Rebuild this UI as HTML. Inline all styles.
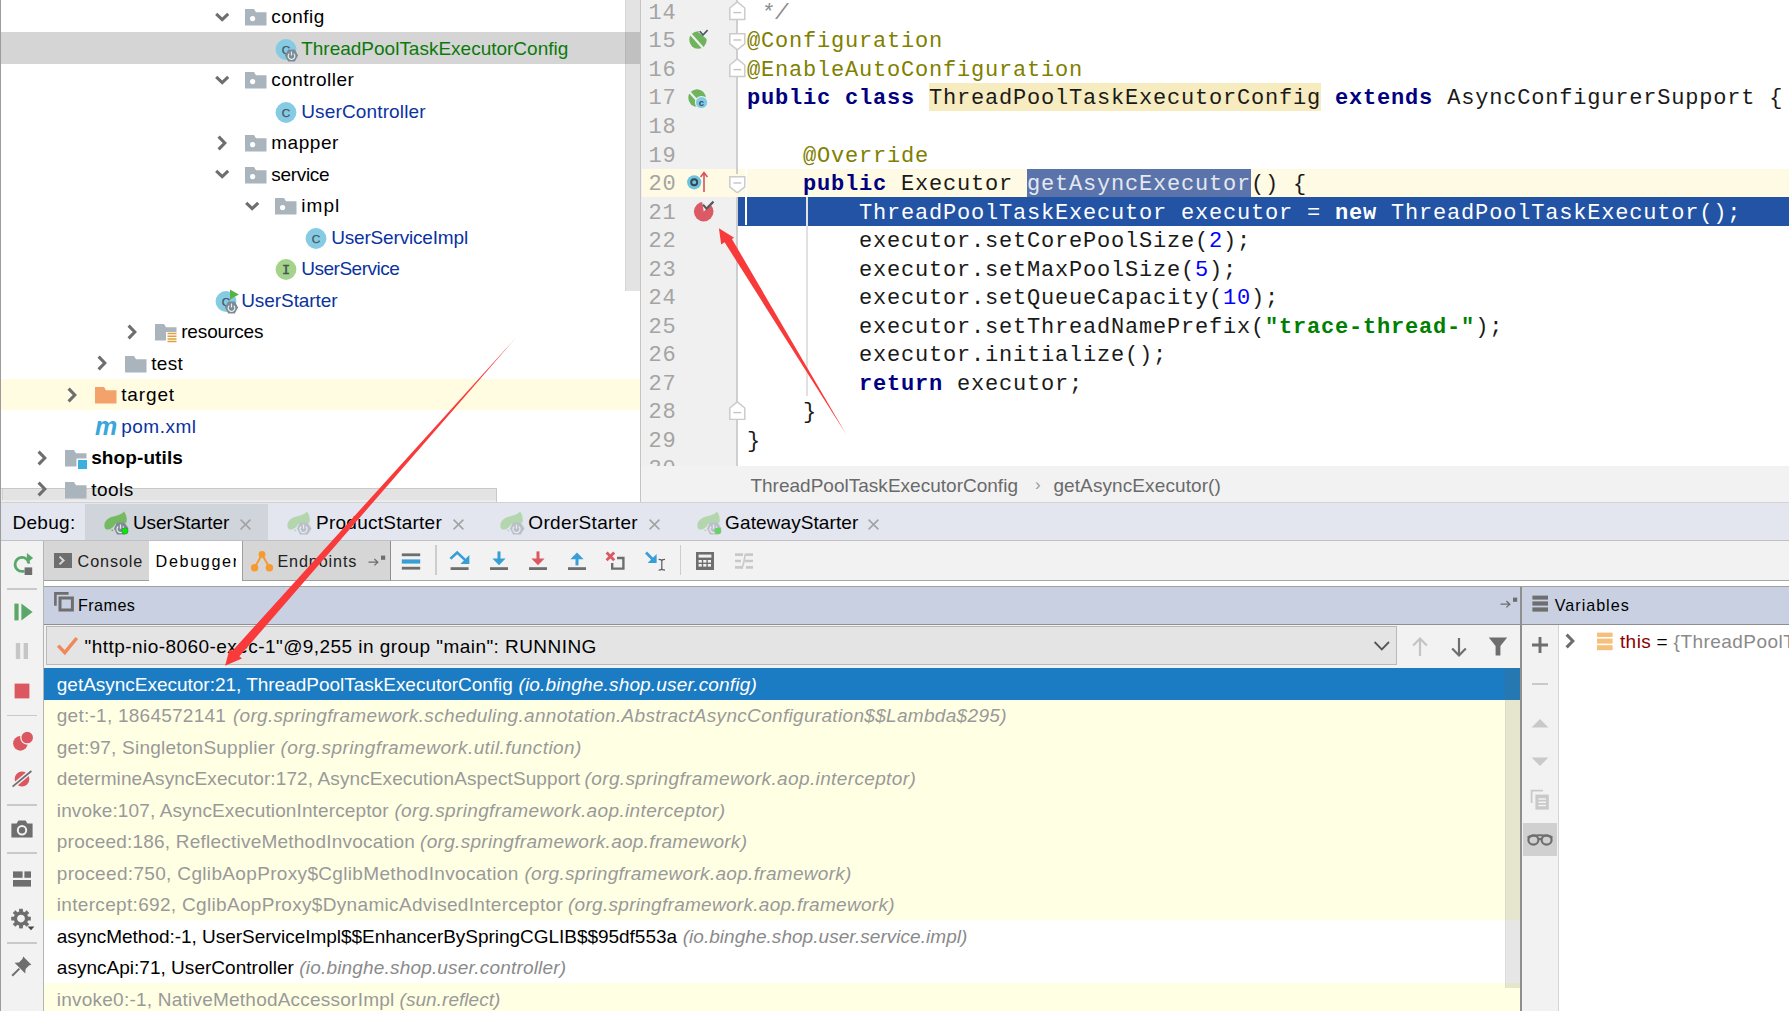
<!DOCTYPE html><html><head><meta charset="utf-8"><title>Debug</title><style>
html,body{margin:0;padding:0}
body{width:1789px;height:1011px;overflow:hidden;position:relative;background:#fff;font-family:"Liberation Sans",sans-serif;font-size:19px;color:#000}
div,span,svg{position:absolute;box-sizing:border-box}
.t{white-space:pre;line-height:32px;height:32px}
.t span,.c span{position:static}
.c{white-space:pre;font-family:"Liberation Mono",monospace;font-size:22px;letter-spacing:0.8px;line-height:28px;height:28px;color:#1a1a1a}
.ln{white-space:pre;font-family:"Liberation Mono",monospace;font-size:22px;letter-spacing:0.8px;line-height:28px;height:28px;color:#a4a4a4}
.kw{color:#000080;font-weight:bold}
.an{color:#808000}
.nu{color:#0000ff}
.st{color:#008000;font-weight:bold}
.gr{color:#8c8c8c}
.it{font-style:italic}
</style></head><body>
<div style="left:0;top:0;width:641px;height:501px;background:#fff"></div>
<div style="left:0;top:32.2px;width:641px;height:31.5px;background:#d5d5d5"></div>
<div style="left:0;top:378.7px;width:641px;height:31.5px;background:#fffce2"></div>
<div style="left:1px;top:487.5px;width:495.8px;height:14.8px;background:#ececec;border-top:1.1px solid #c8c8c8;border-right:1.1px solid #c8c8c8"></div>
<div style="left:2.2px;top:488.6px;width:493.6px;height:11.2px;background:#e3e3e3;border-left:1px solid #cfcfcf"></div>
<svg style="left:214.0px;top:8.849999999999998px" width="16" height="16" viewBox="0 0 16 16"><path d="M2.2 4.8 L8.2 10.6 L14.2 4.8" fill="none" stroke="#6e6e6e" stroke-width="3.1"/></svg>
<svg style="left:245px;top:5.449999999999999px" width="26" height="24" viewBox="0 0 26 24"><path d="M0 4 L9 4 L11 7.2 L21.5 7.2 L21.5 20.6 L0 20.6 Z" fill="#aab4bc"/><circle cx="7.6" cy="13.6" r="2.6" fill="#fff"/></svg>
<span class="t" style="left:271.2px;top:1.3499999999999996px;color:#000;letter-spacing:0.466px;">config</span>
<svg style="left:273px;top:35.85px" width="30" height="30" viewBox="0 0 30 30"><circle cx="13" cy="13.5" r="10.4" fill="#86cbe4"/><text x="13" y="17.7" text-anchor="middle" font-family="Liberation Sans, sans-serif" font-size="11.8" fill="#46525c" stroke="#46525c" stroke-width="0.25">C</text><path d="M11.9 19.5 L15.2 13.45 L21.8 13.45 L25.1 19.5 L21.8 25.55 L15.2 25.55 Z" fill="#7c8a96"/><path d="M16.3 17.6 A3.3 3.3 0 1 0 20.7 17.6 M18.5 15.6 V19.6" fill="none" stroke="#e8edf0" stroke-width="1.2"/></svg>
<span class="t" style="left:301.2px;top:32.85px;color:#0b7a0b;letter-spacing:-0.004px;">ThreadPoolTaskExecutorConfig</span>
<svg style="left:214.0px;top:71.85000000000001px" width="16" height="16" viewBox="0 0 16 16"><path d="M2.2 4.8 L8.2 10.6 L14.2 4.8" fill="none" stroke="#6e6e6e" stroke-width="3.1"/></svg>
<svg style="left:245px;top:68.45px" width="26" height="24" viewBox="0 0 26 24"><path d="M0 4 L9 4 L11 7.2 L21.5 7.2 L21.5 20.6 L0 20.6 Z" fill="#aab4bc"/><circle cx="7.6" cy="13.6" r="2.6" fill="#fff"/></svg>
<span class="t" style="left:271.2px;top:64.35000000000001px;color:#000;letter-spacing:0.504px;">controller</span>
<svg style="left:273px;top:98.85000000000001px" width="30" height="30" viewBox="0 0 30 30"><circle cx="13" cy="13.5" r="10.4" fill="#86cbe4"/><text x="13" y="17.7" text-anchor="middle" font-family="Liberation Sans, sans-serif" font-size="11.8" fill="#46525c" stroke="#46525c" stroke-width="0.25">C</text></svg>
<span class="t" style="left:301.2px;top:95.85000000000001px;color:#0a32a0;letter-spacing:0.151px;">UserController</span>
<svg style="left:214.0px;top:134.85px" width="16" height="16" viewBox="0 0 16 16"><path d="M4.6 1.6 L10.8 8 L4.6 14.4" fill="none" stroke="#6e6e6e" stroke-width="3.1"/></svg>
<svg style="left:245px;top:131.45px" width="26" height="24" viewBox="0 0 26 24"><path d="M0 4 L9 4 L11 7.2 L21.5 7.2 L21.5 20.6 L0 20.6 Z" fill="#aab4bc"/><circle cx="7.6" cy="13.6" r="2.6" fill="#fff"/></svg>
<span class="t" style="left:271.2px;top:127.35px;color:#000;letter-spacing:0.563px;">mapper</span>
<svg style="left:214.0px;top:166.35px" width="16" height="16" viewBox="0 0 16 16"><path d="M2.2 4.8 L8.2 10.6 L14.2 4.8" fill="none" stroke="#6e6e6e" stroke-width="3.1"/></svg>
<svg style="left:245px;top:162.95px" width="26" height="24" viewBox="0 0 26 24"><path d="M0 4 L9 4 L11 7.2 L21.5 7.2 L21.5 20.6 L0 20.6 Z" fill="#aab4bc"/><circle cx="7.6" cy="13.6" r="2.6" fill="#fff"/></svg>
<span class="t" style="left:271.2px;top:158.85px;color:#000;letter-spacing:-0.298px;">service</span>
<svg style="left:244.0px;top:197.85px" width="16" height="16" viewBox="0 0 16 16"><path d="M2.2 4.8 L8.2 10.6 L14.2 4.8" fill="none" stroke="#6e6e6e" stroke-width="3.1"/></svg>
<svg style="left:275px;top:194.45px" width="26" height="24" viewBox="0 0 26 24"><path d="M0 4 L9 4 L11 7.2 L21.5 7.2 L21.5 20.6 L0 20.6 Z" fill="#aab4bc"/><circle cx="7.6" cy="13.6" r="2.6" fill="#fff"/></svg>
<span class="t" style="left:301.2px;top:190.35px;color:#000;letter-spacing:1.089px;">impl</span>
<svg style="left:303px;top:224.85px" width="30" height="30" viewBox="0 0 30 30"><circle cx="13" cy="13.5" r="10.4" fill="#86cbe4"/><text x="13" y="17.7" text-anchor="middle" font-family="Liberation Sans, sans-serif" font-size="11.8" fill="#46525c" stroke="#46525c" stroke-width="0.25">C</text></svg>
<span class="t" style="left:331.2px;top:221.85px;color:#0a32a0;letter-spacing:-0.172px;">UserServiceImpl</span>
<svg style="left:273px;top:256.34999999999997px" width="30" height="30" viewBox="0 0 30 30"><circle cx="13" cy="13.5" r="10.4" fill="#a5d38a"/><text x="13" y="18.2" text-anchor="middle" font-family="Liberation Mono, monospace" font-size="13.5" fill="#46525c" stroke="#46525c" stroke-width="0.5">I</text></svg>
<span class="t" style="left:301.2px;top:253.35px;color:#0a32a0;letter-spacing:-0.48px;">UserService</span>
<svg style="left:213px;top:287.84999999999997px" width="30" height="30" viewBox="0 0 30 30"><circle cx="13" cy="13.5" r="10.4" fill="#86cbe4"/><text x="13" y="17.7" text-anchor="middle" font-family="Liberation Sans, sans-serif" font-size="11.8" fill="#46525c" stroke="#46525c" stroke-width="0.25">C</text><path d="M17 1.4 L25.8 6.4 L17 11.4 Z" fill="#59b343"/><path d="M11.9 19.5 L15.2 13.45 L21.8 13.45 L25.1 19.5 L21.8 25.55 L15.2 25.55 Z" fill="#7c8a96"/><path d="M16.3 17.6 A3.3 3.3 0 1 0 20.7 17.6 M18.5 15.6 V19.6" fill="none" stroke="#e8edf0" stroke-width="1.2"/></svg>
<span class="t" style="left:241.2px;top:284.84999999999997px;color:#0a32a0;letter-spacing:-0.067px;">UserStarter</span>
<svg style="left:124.0px;top:323.84999999999997px" width="16" height="16" viewBox="0 0 16 16"><path d="M4.6 1.6 L10.8 8 L4.6 14.4" fill="none" stroke="#6e6e6e" stroke-width="3.1"/></svg>
<svg style="left:155px;top:320.45px" width="26" height="24" viewBox="0 0 26 24"><path d="M0 4 L9 4 L11 7.2 L21.5 7.2 L21.5 20.6 L0 20.6 Z" fill="#aab4bc"/><rect x="11" y="12" width="11.5" height="10" fill="#fff"/><path d="M12.5 13.5h9M12.5 16.2h9M12.5 18.9h9M12.5 21.6h9" stroke="#e0a040" stroke-width="1.5"/></svg>
<span class="t" style="left:181.2px;top:316.34999999999997px;color:#000;letter-spacing:-0.147px;">resources</span>
<svg style="left:94.0px;top:355.34999999999997px" width="16" height="16" viewBox="0 0 16 16"><path d="M4.6 1.6 L10.8 8 L4.6 14.4" fill="none" stroke="#6e6e6e" stroke-width="3.1"/></svg>
<svg style="left:125px;top:351.95px" width="26" height="24" viewBox="0 0 26 24"><path d="M0 4 L9 4 L11 7.2 L21.5 7.2 L21.5 20.6 L0 20.6 Z" fill="#aab4bc"/></svg>
<span class="t" style="left:151.2px;top:347.84999999999997px;color:#000;letter-spacing:0.344px;">test</span>
<svg style="left:64.0px;top:386.84999999999997px" width="16" height="16" viewBox="0 0 16 16"><path d="M4.6 1.6 L10.8 8 L4.6 14.4" fill="none" stroke="#6e6e6e" stroke-width="3.1"/></svg>
<svg style="left:95px;top:383.45px" width="26" height="24" viewBox="0 0 26 24"><path d="M0 4 L9 4 L11 7.2 L21.5 7.2 L21.5 20.6 L0 20.6 Z" fill="#f4a26b"/></svg>
<span class="t" style="left:121.2px;top:379.34999999999997px;color:#000;letter-spacing:0.868px;">target</span>
<span class="t it" style="left:95px;top:410.34999999999997px;color:#3aa7dc;font-size:25px;font-weight:bold;letter-spacing:-1px">m</span>
<span class="t" style="left:121.2px;top:410.84999999999997px;color:#0a32a0;letter-spacing:0.5px;">pom.xml</span>
<svg style="left:34.0px;top:449.84999999999997px" width="16" height="16" viewBox="0 0 16 16"><path d="M4.6 1.6 L10.8 8 L4.6 14.4" fill="none" stroke="#6e6e6e" stroke-width="3.1"/></svg>
<svg style="left:65px;top:446.45px" width="26" height="24" viewBox="0 0 26 24"><path d="M0 4 L9 4 L11 7.2 L21.5 7.2 L21.5 20.6 L0 20.6 Z" fill="#aab4bc"/><rect x="11.5" y="12.5" width="11" height="11" fill="#fff"/><rect x="13" y="14" width="9" height="9" fill="#3ab0e0"/></svg>
<span class="t" style="left:91.2px;top:442.34999999999997px;color:#000;font-weight:bold;letter-spacing:0.102px;">shop-utils</span>
<svg style="left:34.0px;top:481.34999999999997px" width="16" height="16" viewBox="0 0 16 16"><path d="M4.6 1.6 L10.8 8 L4.6 14.4" fill="none" stroke="#6e6e6e" stroke-width="3.1"/></svg>
<svg style="left:65px;top:477.95px" width="26" height="24" viewBox="0 0 26 24"><path d="M0 4 L9 4 L11 7.2 L21.5 7.2 L21.5 20.6 L0 20.6 Z" fill="#aab4bc"/></svg>
<span class="t" style="left:91.2px;top:473.84999999999997px;color:#000;letter-spacing:0.452px;">tools</span>
<div style="left:625px;top:0;width:16px;height:291px;background:rgba(100,100,100,.18);border-left:1px solid rgba(100,100,100,.1)"></div>
<div style="left:641px;top:0;width:1148px;height:467px;background:#fff"></div>
<div style="left:640.3px;top:0;width:97px;height:467px;background:#f0f0f0;border-left:1.4px solid #c4c4c4"></div>
<div style="left:641.5px;top:168.97px;width:1148px;height:27.73px;background:#fffae3"></div>
<div style="left:737.5px;top:196.7px;width:1052px;height:28.830000000000002px;background:#2253a4"></div>
<div style="left:736.3px;top:0;width:2px;height:174.17px;background:#cecece"></div>
<div style="left:736.3px;top:196.7px;width:2px;height:270.3px;background:#cecece"></div>
<div style="left:929.0px;top:82.57999999999998px;width:392.0px;height:28.53px;background:#f7ecc0"></div>
<div style="left:1027.0px;top:169.17px;width:224.0px;height:27.53px;background:#5a73aa"></div>
<div style="left:806.3px;top:196.7px;width:1.4px;height:199.71px;background:#e1e1e1"></div>
<div style="left:745.3px;top:168.17px;width:1.3px;height:57.06px;background:#fff"></div>
<span class="ln" style="left:648.6px;top:-0.11000000000001942px">14</span>
<span class="c" style="left:747.0px;top:-0.11000000000001942px"><span class="gr it"> */</span></span>
<span class="ln" style="left:648.6px;top:28.41999999999998px">15</span>
<span class="c" style="left:747.0px;top:28.41999999999998px"><span class="an">@Configuration</span></span>
<span class="ln" style="left:648.6px;top:56.94999999999998px">16</span>
<span class="c" style="left:747.0px;top:56.94999999999998px"><span class="an">@EnableAutoConfiguration</span></span>
<span class="ln" style="left:648.6px;top:85.47999999999999px">17</span>
<span class="c" style="left:747.0px;top:85.47999999999999px"><span class="kw">public class</span> ThreadPoolTaskExecutorConfig <span class="kw">extends</span> AsyncConfigurerSupport {</span>
<span class="ln" style="left:648.6px;top:114.00999999999999px">18</span>
<span class="ln" style="left:648.6px;top:142.54px">19</span>
<span class="c" style="left:747.0px;top:142.54px">    <span class="an">@Override</span></span>
<span class="ln" style="left:648.6px;top:171.07px">20</span>
<span class="c" style="left:747.0px;top:171.07px">    <span class="kw">public</span> Executor <span style="color:#e4e8f1">getAsyncExecutor</span>() {</span>
<span class="ln" style="left:648.6px;top:199.6px">21</span>
<span class="c" style="left:747.0px;top:199.6px"><span style="color:#fff">        ThreadPoolTaskExecutor executor = <b>new</b> ThreadPoolTaskExecutor();</span></span>
<span class="ln" style="left:648.6px;top:228.13px">22</span>
<span class="c" style="left:747.0px;top:228.13px">        executor.setCorePoolSize(<span class="nu">2</span>);</span>
<span class="ln" style="left:648.6px;top:256.65999999999997px">23</span>
<span class="c" style="left:747.0px;top:256.65999999999997px">        executor.setMaxPoolSize(<span class="nu">5</span>);</span>
<span class="ln" style="left:648.6px;top:285.18999999999994px">24</span>
<span class="c" style="left:747.0px;top:285.18999999999994px">        executor.setQueueCapacity(<span class="nu">10</span>);</span>
<span class="ln" style="left:648.6px;top:313.71999999999997px">25</span>
<span class="c" style="left:747.0px;top:313.71999999999997px">        executor.setThreadNamePrefix(<span class="st">"trace-thread-"</span>);</span>
<span class="ln" style="left:648.6px;top:342.25px">26</span>
<span class="c" style="left:747.0px;top:342.25px">        executor.initialize();</span>
<span class="ln" style="left:648.6px;top:370.78px">27</span>
<span class="c" style="left:747.0px;top:370.78px">        <span class="kw">return</span> executor;</span>
<span class="ln" style="left:648.6px;top:399.30999999999995px">28</span>
<span class="c" style="left:747.0px;top:399.30999999999995px">    }</span>
<span class="ln" style="left:648.6px;top:427.84px">29</span>
<span class="c" style="left:747.0px;top:427.84px">}</span>
<span class="ln" style="left:648.6px;top:456.36999999999995px">30</span>
<svg style="left:729.1px;top:1.1899999999999809px" width="16.6" height="19.4" viewBox="0 0 16.6 19.4"><path d="M0.8 18.6 H15.8 V7 L8.3 0.8 L0.8 7 Z" fill="#fff" stroke="#cbcbcb" stroke-width="1.5"/><path d="M4.4 11.6H12.2" stroke="#c4c4c4" stroke-width="1.4"/></svg>
<svg style="left:729.1px;top:32.91999999999998px" width="16.6" height="17.6" viewBox="0 0 16.6 17.6"><path d="M0.8 0.8 H15.8 V10.8 L8.3 16.8 L0.8 10.8 Z" fill="#fff" stroke="#cbcbcb" stroke-width="1.5"/><path d="M4.4 7H12.2" stroke="#c4c4c4" stroke-width="1.4"/></svg>
<svg style="left:729.1px;top:58.249999999999986px" width="16.6" height="19.4" viewBox="0 0 16.6 19.4"><path d="M0.8 18.6 H15.8 V7 L8.3 0.8 L0.8 7 Z" fill="#fff" stroke="#cbcbcb" stroke-width="1.5"/><path d="M4.4 11.6H12.2" stroke="#c4c4c4" stroke-width="1.4"/></svg>
<svg style="left:729.1px;top:175.57px" width="16.6" height="17.6" viewBox="0 0 16.6 17.6"><path d="M0.8 0.8 H15.8 V10.8 L8.3 16.8 L0.8 10.8 Z" fill="#fff" stroke="#cbcbcb" stroke-width="1.5"/><path d="M4.4 7H12.2" stroke="#c4c4c4" stroke-width="1.4"/></svg>
<svg style="left:729.1px;top:400.60999999999996px" width="16.6" height="19.4" viewBox="0 0 16.6 19.4"><path d="M0.8 18.6 H15.8 V7 L8.3 0.8 L0.8 7 Z" fill="#fff" stroke="#cbcbcb" stroke-width="1.5"/><path d="M4.4 11.6H12.2" stroke="#c4c4c4" stroke-width="1.4"/></svg>
<svg style="left:686.7px;top:27.484999999999985px" width="26" height="26" viewBox="0 0 26 26"><circle cx="11" cy="13" r="8.7" fill="#6fb35c"/><path d="M3.5 7 L16 21" stroke="#f0f0f0" stroke-width="2.2"/><path d="M11 5 L21 5 L21 13 Z" fill="#f0f0f0"/><path d="M12.8 4.2 L16 8 L20.6 3.2" fill="none" stroke="#4a5868" stroke-width="1.7"/></svg>
<svg style="left:686.2px;top:84.54499999999999px" width="26" height="26" viewBox="0 0 26 26"><circle cx="11" cy="13" r="8.7" fill="#6fb35c"/><path d="M3.5 7 L16 21" stroke="#f0f0f0" stroke-width="2.2"/><circle cx="15.5" cy="17.5" r="6.6" fill="#f0f0f0"/><circle cx="15.5" cy="17.5" r="5.6" fill="#7ecbe6"/><text x="15.5" y="20.6" text-anchor="middle" font-family="Liberation Sans, sans-serif" font-size="9.5" font-weight="bold" fill="#3c4a55">c</text></svg>
<svg style="left:684px;top:169.435px" width="30" height="26" viewBox="0 0 30 26"><circle cx="10.2" cy="13.3" r="7.1" fill="#6cc3e0"/><circle cx="10.2" cy="13.3" r="3" fill="none" stroke="#3a4752" stroke-width="1.9"/><path d="M20 23 V4.5 M16.6 8 L20 3.6 L23.4 8" fill="none" stroke="#d8525f" stroke-width="1.6"/></svg>
<svg style="left:690px;top:195.96499999999997px" width="30" height="30" viewBox="0 0 30 30"><circle cx="13.7" cy="15.6" r="9.8" fill="#dc5a66"/><path d="M13.7 15.6 L12 5 L26 5 Z" fill="#f0f0f0"/><path d="M13 8.6 L16.5 12.6 L23.5 5.6" fill="none" stroke="#5a5a5a" stroke-width="2.2"/></svg>
<div style="left:640.3px;top:465.8px;width:1149px;height:37px;background:#f2f2f2;border-left:1.4px solid #c4c4c4"></div>
<span class="t" style="left:750.4px;top:469.9px;color:#6a6a6a;letter-spacing:0.014px;">ThreadPoolTaskExecutorConfig</span>
<span class="t" style="left:1035px;top:469px;color:#9a9a9a;font-size:17px">›</span>
<span class="t" style="left:1053.4px;top:469.9px;color:#6a6a6a;letter-spacing:0.1px;">getAsyncExecutor()</span>
<div style="left:0;top:502.2px;width:1789px;height:38px;background:#e3e6ef;border-top:1px solid #d2d2d4"></div>
<div style="left:85px;top:504px;width:183px;height:35.5px;background:#d0d4db"></div>
<span class="t" style="left:12.4px;top:506.5px;color:#000;letter-spacing:0.32px;">Debug:</span>
<svg style="left:103.5px;top:510.5px" width="27" height="26" viewBox="0 0 27 26"><path d="M20.1 0.5 C17.5 3.6 13 4.6 9.4 5.6 C4 7 0.4 10 0.4 14.4 C0.4 16.2 1 17.6 2.2 18.6 L5.2 18.6 C8 17.4 10 15.4 11.4 13 L22.6 11.4 C23.3 7.4 22.2 3.6 20.1 0.5 Z" fill="#76b963"/><path d="M6.4 19 L9.4 18.4 L9 20.4 Z" fill="#76b963"/><path d="M10 17.5 L13 11.6 L20.7 11.6 L24.5 17.5 L20.7 23.4 L13 23.4 Z" fill="#7f8b95"/><path d="M14.2 15.4 A3.5 3.5 0 1 0 18.8 15.4 M16.5 13.4 V17.8" fill="none" stroke="#e6e9ee" stroke-width="1.3"/><circle cx="20.9" cy="19.9" r="3.2" fill="#08e808" stroke="#3c6a3c" stroke-width="0.5"/></svg>
<span class="t" style="left:132.89999999999998px;top:506.5px;color:#000;letter-spacing:-0.076px;">UserStarter</span>
<svg style="left:240px;top:518.5px" width="11" height="11" viewBox="0 0 11 11"><path d="M0.6 0.6 L10.4 10.4 M10.4 0.6 L0.6 10.4" stroke="#a2a2a2" stroke-width="1.5"/></svg>
<svg style="left:286.8px;top:510.5px" width="27" height="26" viewBox="0 0 27 26"><path d="M20.1 0.5 C17.5 3.6 13 4.6 9.4 5.6 C4 7 0.4 10 0.4 14.4 C0.4 16.2 1 17.6 2.2 18.6 L5.2 18.6 C8 17.4 10 15.4 11.4 13 L22.6 11.4 C23.3 7.4 22.2 3.6 20.1 0.5 Z" fill="#b4d6ae"/><path d="M6.4 19 L9.4 18.4 L9 20.4 Z" fill="#b4d6ae"/><path d="M10 17.5 L13 11.6 L20.7 11.6 L24.5 17.5 L20.7 23.4 L13 23.4 Z" fill="#b9c0c8"/><path d="M14.2 15.4 A3.5 3.5 0 1 0 18.8 15.4 M16.5 13.4 V17.8" fill="none" stroke="#e6e9ee" stroke-width="1.3"/></svg>
<span class="t" style="left:316.0px;top:506.5px;color:#000;letter-spacing:0.25px;">ProductStarter</span>
<svg style="left:453px;top:518.5px" width="11" height="11" viewBox="0 0 11 11"><path d="M0.6 0.6 L10.4 10.4 M10.4 0.6 L0.6 10.4" stroke="#a2a2a2" stroke-width="1.5"/></svg>
<svg style="left:499.6px;top:510.5px" width="27" height="26" viewBox="0 0 27 26"><path d="M20.1 0.5 C17.5 3.6 13 4.6 9.4 5.6 C4 7 0.4 10 0.4 14.4 C0.4 16.2 1 17.6 2.2 18.6 L5.2 18.6 C8 17.4 10 15.4 11.4 13 L22.6 11.4 C23.3 7.4 22.2 3.6 20.1 0.5 Z" fill="#b4d6ae"/><path d="M6.4 19 L9.4 18.4 L9 20.4 Z" fill="#b4d6ae"/><path d="M10 17.5 L13 11.6 L20.7 11.6 L24.5 17.5 L20.7 23.4 L13 23.4 Z" fill="#b9c0c8"/><path d="M14.2 15.4 A3.5 3.5 0 1 0 18.8 15.4 M16.5 13.4 V17.8" fill="none" stroke="#e6e9ee" stroke-width="1.3"/></svg>
<span class="t" style="left:528.3000000000001px;top:506.5px;color:#000;letter-spacing:0.342px;">OrderStarter</span>
<svg style="left:649px;top:518.5px" width="11" height="11" viewBox="0 0 11 11"><path d="M0.6 0.6 L10.4 10.4 M10.4 0.6 L0.6 10.4" stroke="#a2a2a2" stroke-width="1.5"/></svg>
<svg style="left:696.5px;top:510.5px" width="27" height="26" viewBox="0 0 27 26"><path d="M20.1 0.5 C17.5 3.6 13 4.6 9.4 5.6 C4 7 0.4 10 0.4 14.4 C0.4 16.2 1 17.6 2.2 18.6 L5.2 18.6 C8 17.4 10 15.4 11.4 13 L22.6 11.4 C23.3 7.4 22.2 3.6 20.1 0.5 Z" fill="#b4d6ae"/><path d="M6.4 19 L9.4 18.4 L9 20.4 Z" fill="#b4d6ae"/><path d="M10 17.5 L13 11.6 L20.7 11.6 L24.5 17.5 L20.7 23.4 L13 23.4 Z" fill="#b9c0c8"/><path d="M14.2 15.4 A3.5 3.5 0 1 0 18.8 15.4 M16.5 13.4 V17.8" fill="none" stroke="#e6e9ee" stroke-width="1.3"/><circle cx="20.9" cy="19.9" r="3.2" fill="#5fd85f" stroke="#8fb08f" stroke-width="0.5"/></svg>
<span class="t" style="left:725.1px;top:506.5px;color:#000;letter-spacing:0.093px;">GatewayStarter</span>
<svg style="left:868px;top:518.5px" width="11" height="11" viewBox="0 0 11 11"><path d="M0.6 0.6 L10.4 10.4 M10.4 0.6 L0.6 10.4" stroke="#a2a2a2" stroke-width="1.5"/></svg>
<div style="left:0;top:540px;width:1789px;height:41px;background:#f2f2f2;border-top:0.9px solid #c0c0c2;border-bottom:1.2px solid #a6a6a6"></div>
<div style="left:44px;top:580.9px;width:1745px;height:6.1px;background:#fff;border-bottom:1.2px solid #a0a0a0"></div>
<div style="left:1px;top:540.9px;width:43.1px;height:471px;background:#f2f2f2;border-right:1.1px solid #b4b4b4"></div>
<div style="left:44px;top:540.9px;width:105px;height:40px;background:#d6d6d6;border-bottom:1.2px solid #9e9e9e"></div>
<div style="left:148.6px;top:540.9px;width:93.6px;height:45px;background:#fff"></div>
<div style="left:242px;top:540.9px;width:148.8px;height:40px;background:#d6d6d6;border-bottom:1.2px solid #9e9e9e;border-left:1.4px solid #9e9e9e;border-right:1.2px solid #8e8e8e"></div>
<svg style="left:54px;top:553.3px" width="18" height="15" viewBox="0 0 18 15"><rect width="18" height="15" fill="#6e6e6e"/><path d="M5.5 3.6 L9.6 7.5 L5.5 11.4" fill="none" stroke="#d9d9d9" stroke-width="2"/></svg>
<span class="t" style="left:77.6px;top:545px;color:#222;font-size:16.2px;letter-spacing:0.885px;">Console</span>
<span class="t" style="left:155.6px;top:545px;color:#000;font-size:16.2px;letter-spacing:1.636px;width:80px;overflow:hidden;">Debugger</span>
<svg style="left:250px;top:549.5px" width="24" height="23" viewBox="0 0 24 23"><path d="M4.6 17.6 L12 4.6 L19.4 17.6 M4.6 17.6" fill="none" stroke="#f7992f" stroke-width="2"/><circle cx="12" cy="4.4" r="3.4" fill="#f7992f"/><circle cx="4.6" cy="17.8" r="3.7" fill="#f7992f"/><circle cx="19.4" cy="17.8" r="3.7" fill="#f7992f"/><path d="M8.3 13.5 L12 17.5 L15.7 13.5" fill="none" stroke="#f7992f" stroke-width="0"/></svg>
<span class="t" style="left:277.4px;top:545px;color:#222;font-size:16.2px;letter-spacing:0.878px;">Endpoints</span>
<svg style="left:368px;top:554.5px" width="18" height="12" viewBox="0 0 18 12"><path d="M0.5 7.2 H9.5 M6.4 4 L9.8 7.2 L6.4 10.4" fill="none" stroke="#6e6e6e" stroke-width="1.3"/><rect x="13" y="0.6" width="4.2" height="4.2" fill="#6e6e6e"/></svg>
<svg style="left:400.0px;top:550px" width="22" height="22" viewBox="0 0 22 22"><rect x="1.8" y="3.4" width="18.4" height="2.8" fill="#6e6e6e"/><rect x="1.8" y="9.4" width="18.4" height="4.2" fill="#389fd6"/><rect x="1.8" y="16.8" width="18.4" height="2.8" fill="#6e6e6e"/></svg>
<div style="left:435.3px;top:545px;width:1.5px;height:30px;background:#cdcdcd"></div>
<svg style="left:449.0px;top:550px" width="22" height="22" viewBox="0 0 22 22"><rect x="1.6" y="17.2" width="18" height="2.8" fill="#6e6e6e"/><path d="M1.4 8.8 L8.2 2.6 L17.6 11.4" fill="none" stroke="#389fd6" stroke-width="2.6"/><path d="M20.4 5 V14 H11.4 Z" fill="#389fd6"/></svg>
<svg style="left:488.0px;top:550px" width="22" height="22" viewBox="0 0 22 22"><rect x="2" y="17.2" width="18" height="2.8" fill="#6e6e6e"/><path d="M11 1.4 V10" stroke="#389fd6" stroke-width="3"/><path d="M4.4 8.6 H17.6 L11 15.2 Z" fill="#389fd6"/></svg>
<svg style="left:527.0px;top:550px" width="22" height="22" viewBox="0 0 22 22"><rect x="2" y="17.2" width="18" height="2.8" fill="#6e6e6e"/><path d="M11 1.4 V10" stroke="#db5860" stroke-width="3"/><path d="M4.4 8.6 H17.6 L11 15.2 Z" fill="#db5860"/></svg>
<svg style="left:566.0px;top:550px" width="22" height="22" viewBox="0 0 22 22"><rect x="2" y="17.2" width="18" height="2.8" fill="#6e6e6e"/><path d="M11 15.4 V8" stroke="#389fd6" stroke-width="3"/><path d="M4.4 9.2 H17.6 L11 2.6 Z" fill="#389fd6"/></svg>
<svg style="left:605.0px;top:550px" width="22" height="22" viewBox="0 0 22 22"><path d="M1.6 2.6 L9.2 10.2 M9.2 2.6 L1.6 10.2" stroke="#db5860" stroke-width="2.8"/><path d="M12 8 H18.4 V18.6 H7.2 V13" fill="none" stroke="#6e6e6e" stroke-width="2.4"/></svg>
<svg style="left:644.0px;top:550px" width="24" height="22" viewBox="0 0 24 22"><path d="M2 2.6 L9.6 10.2" stroke="#389fd6" stroke-width="2.8"/><path d="M12.6 4 V13 H3.6 Z" fill="#389fd6"/><path d="M17.8 9.8 V19.8 M14.6 9.4 C16.6 9.4 17.8 9.6 17.8 11 C17.8 9.6 19 9.4 21 9.4 M14.6 20.2 C16.6 20.2 17.8 20 17.8 18.6 C17.8 20 19 20.2 21 20.2" fill="none" stroke="#5a5a5a" stroke-width="1.2"/></svg>
<div style="left:679.5px;top:545px;width:1.5px;height:30px;background:#cdcdcd"></div>
<svg style="left:694.0px;top:550px" width="22" height="22" viewBox="0 0 22 22"><rect x="2" y="2" width="18" height="18" fill="#6e6e6e"/><rect x="4.6" y="4.6" width="12.8" height="3" fill="#f2f2f2"/><rect x="4.6" y="10" width="3.2" height="2.6" fill="#f2f2f2"/><rect x="4.6" y="14" width="3.2" height="2.6" fill="#f2f2f2"/><rect x="9.2" y="10" width="3.2" height="2.6" fill="#f2f2f2"/><rect x="9.2" y="14" width="3.2" height="2.6" fill="#f2f2f2"/><rect x="13.799999999999999" y="10" width="3.2" height="2.6" fill="#f2f2f2"/><rect x="13.799999999999999" y="14" width="3.2" height="2.6" fill="#f2f2f2"/></svg>
<svg style="left:733.0px;top:550px" width="22" height="22" viewBox="0 0 22 22"><path d="M2 4.6 H10 M2 11 H8 M2 17.4 H10 M13 4.6 H20 M12 11 H20 M13 17.4 H20" stroke="#c9c9c9" stroke-width="2.6"/><path d="M12.6 3.4 C11 8 11.4 14 8.6 18.6" fill="none" stroke="#c9c9c9" stroke-width="1.6"/></svg>
<svg style="left:9.5px;top:551.0px" width="26" height="26" viewBox="0 0 26 26"><path d="M14.6 20.4 H12 A7 7 0 1 1 19 12.6" fill="none" stroke="#59a869" stroke-width="2.8"/><path d="M13.6 8.6 H23.4 L18.5 2.4 Z" fill="#59a869" transform="rotate(90 18.5 7)"/><rect x="14.6" y="16.4" width="7.6" height="7.6" fill="#6e6e6e"/></svg>
<div style="left:7px;top:588.3px;width:29.5px;height:1.5px;background:#c9c9c9"></div>
<svg style="left:10.2px;top:599.3px" width="26" height="26" viewBox="0 0 26 26"><rect x="4.4" y="4.6" width="4.2" height="16.8" fill="#59a869"/><path d="M11.4 4.6 L22.6 13 L11.4 21.4 Z" fill="#59a869"/></svg>
<svg style="left:9.0px;top:638.0px" width="26" height="26" viewBox="0 0 26 26"><rect x="6.8" y="5" width="4.4" height="16" fill="#c6c6c6"/><rect x="14.6" y="5" width="4.4" height="16" fill="#c6c6c6"/></svg>
<svg style="left:9.0px;top:677.5px" width="26" height="26" viewBox="0 0 26 26"><rect x="5.6" y="5.6" width="14.8" height="14.8" fill="#db5860"/></svg>
<div style="left:7px;top:714.6999999999999px;width:29.5px;height:1.5px;background:#c9c9c9"></div>
<svg style="left:9.5px;top:727.0px" width="26" height="26" viewBox="0 0 26 26"><circle cx="10.4" cy="16.4" r="7.3" fill="#db5860"/><circle cx="17.2" cy="10.6" r="6.4" fill="#db5860" stroke="#f2f2f2" stroke-width="1.3"/></svg>
<svg style="left:9.0px;top:766.3px" width="26" height="26" viewBox="0 0 26 26"><circle cx="13" cy="13" r="7.4" fill="#db5860"/><path d="M3.2 21 L22.8 4.6" stroke="#f2f2f2" stroke-width="4.6"/><path d="M3.6 20.6 L22.4 5" stroke="#6e6e6e" stroke-width="1.8"/></svg>
<div style="left:7px;top:804.3px;width:29.5px;height:1.5px;background:#c9c9c9"></div>
<svg style="left:9.0px;top:816.0px" width="26" height="26" viewBox="0 0 26 26"><path d="M2.4 7.4 H7.6 L9.4 4.4 H16.6 L18.4 7.4 H23.6 V21.6 H2.4 Z" fill="#6e6e6e"/><circle cx="13" cy="14.2" r="4.2" fill="none" stroke="#f2f2f2" stroke-width="2"/></svg>
<div style="left:7px;top:852.3px;width:29.5px;height:1.5px;background:#c9c9c9"></div>
<svg style="left:9.0px;top:866.0px" width="26" height="26" viewBox="0 0 26 26"><rect x="4" y="5.4" width="9.6" height="6.4" fill="#6e6e6e"/><rect x="15.4" y="5.4" width="6.6" height="6.4" fill="#6e6e6e"/><rect x="4" y="14" width="18" height="6.6" fill="#6e6e6e"/></svg>
<svg style="left:9.0px;top:905.5px" width="26" height="26" viewBox="0 0 26 26"><g transform="translate(12 12.6)"><circle r="5.6" fill="none" stroke="#6e6e6e" stroke-width="3.4"/><rect x="-1.9" y="-9.8" width="3.8" height="4" fill="#6e6e6e" transform="rotate(0)"/><rect x="-1.9" y="-9.8" width="3.8" height="4" fill="#6e6e6e" transform="rotate(45)"/><rect x="-1.9" y="-9.8" width="3.8" height="4" fill="#6e6e6e" transform="rotate(90)"/><rect x="-1.9" y="-9.8" width="3.8" height="4" fill="#6e6e6e" transform="rotate(135)"/><rect x="-1.9" y="-9.8" width="3.8" height="4" fill="#6e6e6e" transform="rotate(180)"/><rect x="-1.9" y="-9.8" width="3.8" height="4" fill="#6e6e6e" transform="rotate(225)"/><rect x="-1.9" y="-9.8" width="3.8" height="4" fill="#6e6e6e" transform="rotate(270)"/><rect x="-1.9" y="-9.8" width="3.8" height="4" fill="#6e6e6e" transform="rotate(315)"/></g><path d="M18.6 20.6 H25.4 L22 24.2 Z" fill="#444"/></svg>
<div style="left:7px;top:942.3px;width:29.5px;height:1.5px;background:#c9c9c9"></div>
<svg style="left:9.0px;top:953.0px" width="26" height="26" viewBox="0 0 26 26"><path d="M14.2 3.6 L22.4 11.8 L20 12.6 L16.6 16 L16.2 20.4 L5.6 9.8 L10 9.4 L13.4 6 Z" fill="#6e6e6e"/><path d="M10.4 15.6 L3.2 22.8" stroke="#6e6e6e" stroke-width="2"/></svg>
<div style="left:44px;top:586.9px;width:1476px;height:37.7px;background:#c8d0e2;border-bottom:1.7px solid #8f8f8f"></div>
<svg style="left:52px;top:591px" width="24" height="22" viewBox="0 0 24 22"><path d="M3.4 14.8 V2.4 H16.6" fill="none" stroke="#6e6e6e" stroke-width="2.6"/><rect x="8" y="7" width="12.4" height="12" fill="none" stroke="#6e6e6e" stroke-width="3"/></svg>
<span class="t" style="left:78px;top:588.5px;color:#000;font-size:16.2px;letter-spacing:0.421px;">Frames</span>
<svg style="left:1499.5px;top:597px" width="18" height="12" viewBox="0 0 18 12"><path d="M0.5 7.2 H9.5 M6.4 4 L9.8 7.2 L6.4 10.4" fill="none" stroke="#6e6e6e" stroke-width="1.3"/><rect x="13" y="0.6" width="4.2" height="4.2" fill="#6e6e6e"/></svg>
<div style="left:1519.8px;top:586.9px;width:2.4px;height:425px;background:#8f8f8f"></div>
<div style="left:1522px;top:586.9px;width:267px;height:37.7px;background:#c8d0e2;border-bottom:1.7px solid #8f8f8f"></div>
<svg style="left:1532px;top:595px" width="17" height="18" viewBox="0 0 17 18"><rect x="0.4" y="0.6" width="15.6" height="4" fill="#6e6e6e"/><rect x="0.4" y="6.4" width="15.6" height="4.2" fill="#6e6e6e"/><rect x="0.4" y="12.4" width="15.6" height="4.2" fill="#6e6e6e"/></svg>
<span class="t" style="left:1554.8px;top:588.5px;color:#000;font-size:16.2px;letter-spacing:0.956px;">Variables</span>
<div style="left:44px;top:624.6px;width:1476px;height:388px;background:#f2f2f2"></div>
<div style="left:46px;top:626.3px;width:1350.5px;height:38.9px;background:#e4e4e4;border:1.3px solid #b9b9b9"></div>
<svg style="left:56px;top:635px" width="24" height="22" viewBox="0 0 24 22"><path d="M2.2 10.6 L8.8 17.6 L20.8 3" fill="none" stroke="#f0895a" stroke-width="3.5"/></svg>
<span class="t" style="left:84.6px;top:631.1px;color:#000;letter-spacing:0.442px;">"http-nio-8060-exec-1"@9,255 in group "main": RUNNING</span>
<svg style="left:1373px;top:640px" width="18" height="12" viewBox="0 0 18 12"><path d="M1.6 2 L8.8 9.4 L16 2" fill="none" stroke="#555" stroke-width="1.8"/></svg>
<svg style="left:1411px;top:636px" width="18" height="22" viewBox="0 0 18 22"><path d="M9 20 V3 M2.2 9.6 L9 2.6 L15.8 9.6" fill="none" stroke="#c4c4c4" stroke-width="2.2"/></svg>
<svg style="left:1450px;top:636px" width="18" height="22" viewBox="0 0 18 22"><path d="M9 2 V19 M2.2 12.4 L9 19.4 L15.8 12.4" fill="none" stroke="#6e6e6e" stroke-width="2.2"/></svg>
<svg style="left:1488px;top:636px" width="20" height="22" viewBox="0 0 20 22"><path d="M0.8 1.6 H19.2 L12.4 10 V19.6 H7.6 V10 Z" fill="#6e6e6e"/></svg>
<div style="left:44px;top:668.1px;width:1476px;height:31.8px;background:#1b7cc3"></div>
<span class="t" style="left:56.800000000000004px;top:668.7px;color:#fff;letter-spacing:-0.018px;">getAsyncExecutor:21, ThreadPoolTaskExecutorConfig</span>
<span class="t" style="left:518.4px;top:668.7px;color:#fff;font-style:italic;letter-spacing:0.169px;">(io.binghe.shop.user.config)</span>
<div style="left:44px;top:699.6px;width:1476px;height:31.8px;background:#ffffe4"></div>
<span class="t" style="left:56.800000000000004px;top:700.2px;color:#999;letter-spacing:0.249px;">get:-1, 1864572141</span>
<span class="t" style="left:232.9px;top:700.2px;color:#999;font-style:italic;letter-spacing:0.319px;">(org.springframework.scheduling.annotation.AbstractAsyncConfiguration$$Lambda$295)</span>
<div style="left:44px;top:731.1px;width:1476px;height:31.8px;background:#ffffe4"></div>
<span class="t" style="left:56.800000000000004px;top:731.7px;color:#999;letter-spacing:0.235px;">get:97, SingletonSupplier</span>
<span class="t" style="left:280.5px;top:731.7px;color:#999;font-style:italic;letter-spacing:0.399px;">(org.springframework.util.function)</span>
<div style="left:44px;top:762.6px;width:1476px;height:31.8px;background:#ffffe4"></div>
<span class="t" style="left:56.800000000000004px;top:763.2px;color:#999;letter-spacing:0.107px;">determineAsyncExecutor:172, AsyncExecutionAspectSupport</span>
<span class="t" style="left:584.6px;top:763.2px;color:#999;font-style:italic;letter-spacing:0.369px;">(org.springframework.aop.interceptor)</span>
<div style="left:44px;top:794.1px;width:1476px;height:31.8px;background:#ffffe4"></div>
<span class="t" style="left:56.800000000000004px;top:794.7px;color:#999;letter-spacing:0.121px;">invoke:107, AsyncExecutionInterceptor</span>
<span class="t" style="left:394.40000000000003px;top:794.7px;color:#999;font-style:italic;letter-spacing:0.355px;">(org.springframework.aop.interceptor)</span>
<div style="left:44px;top:825.6px;width:1476px;height:31.8px;background:#ffffe4"></div>
<span class="t" style="left:56.800000000000004px;top:826.2px;color:#999;letter-spacing:0.22px;">proceed:186, ReflectiveMethodInvocation</span>
<span class="t" style="left:420.1px;top:826.2px;color:#999;font-style:italic;letter-spacing:0.298px;">(org.springframework.aop.framework)</span>
<div style="left:44px;top:857.1px;width:1476px;height:31.8px;background:#ffffe4"></div>
<span class="t" style="left:56.800000000000004px;top:857.7px;color:#999;letter-spacing:0.335px;">proceed:750, CglibAopProxy$CglibMethodInvocation</span>
<span class="t" style="left:524.4px;top:857.7px;color:#999;font-style:italic;letter-spacing:0.301px;">(org.springframework.aop.framework)</span>
<div style="left:44px;top:888.6px;width:1476px;height:31.8px;background:#ffffe4"></div>
<span class="t" style="left:56.800000000000004px;top:889.2px;color:#999;letter-spacing:0.321px;">intercept:692, CglibAopProxy$DynamicAdvisedInterceptor</span>
<span class="t" style="left:568.0px;top:889.2px;color:#999;font-style:italic;letter-spacing:0.287px;">(org.springframework.aop.framework)</span>
<div style="left:44px;top:920.1px;width:1476px;height:31.8px;background:#fff"></div>
<span class="t" style="left:56.800000000000004px;top:920.7px;color:#000;letter-spacing:-0.029px;">asyncMethod:-1, UserServiceImpl$$EnhancerBySpringCGLIB$$95df553a</span>
<span class="t" style="left:682.7px;top:920.7px;color:#8a8a8a;font-style:italic;letter-spacing:0.039px;">(io.binghe.shop.user.service.impl)</span>
<div style="left:44px;top:951.6px;width:1476px;height:31.8px;background:#fff"></div>
<span class="t" style="left:56.800000000000004px;top:952.2px;color:#000;letter-spacing:0.02px;">asyncApi:71, UserController</span>
<span class="t" style="left:299.3px;top:952.2px;color:#8a8a8a;font-style:italic;letter-spacing:0.178px;">(io.binghe.shop.user.controller)</span>
<div style="left:44px;top:983.1px;width:1476px;height:31.8px;background:#ffffe4"></div>
<span class="t" style="left:56.800000000000004px;top:983.7px;color:#999;letter-spacing:0.228px;">invoke0:-1, NativeMethodAccessorImpl</span>
<span class="t" style="left:399.6px;top:983.7px;color:#999;font-style:italic;letter-spacing:0.037px;">(sun.reflect)</span>
<div style="left:1505px;top:668.1px;width:14.6px;height:320px;background:rgba(100,100,100,.16);border-left:1px solid rgba(100,100,100,.08)"></div>
<div style="left:1522px;top:624.6px;width:37px;height:388px;background:#f2f2f2;border-right:1.2px solid #d4d4d4"></div>
<div style="left:1559px;top:624.6px;width:230px;height:388px;background:#fff"></div>
<svg style="left:1531px;top:636px" width="18" height="18" viewBox="0 0 18 18"><path d="M9 1 V17 M1 9 H17" stroke="#6e6e6e" stroke-width="2.9"/></svg>
<div style="left:1532px;top:682.5px;width:16px;height:2.2px;background:#c9c9c9"></div>
<svg style="left:1531px;top:718px" width="18" height="10" viewBox="0 0 18 10"><path d="M0.6 9.4 L9 1 L17.4 9.4 Z" fill="#c9c9c9"/></svg>
<svg style="left:1531px;top:757px" width="18" height="10" viewBox="0 0 18 10"><path d="M0.6 0.6 L9 9 L17.4 0.6 Z" fill="#c9c9c9"/></svg>
<svg style="left:1530px;top:789px" width="20" height="22" viewBox="0 0 20 22"><path d="M1.6 14 V1.6 H13" fill="none" stroke="#c9c9c9" stroke-width="1.8"/><rect x="5.4" y="5.6" width="13.4" height="15" fill="#c9c9c9"/><path d="M8.4 10 H16 M8.4 13.2 H16 M8.4 16.4 H16" stroke="#f2f2f2" stroke-width="1.5"/></svg>
<div style="left:1523px;top:823px;width:33.6px;height:32.6px;background:#d0d0d0"></div>
<svg style="left:1526px;top:831px" width="28" height="16" viewBox="0 0 28 16"><ellipse cx="7.4" cy="9" rx="5" ry="4.6" fill="none" stroke="#6e6e6e" stroke-width="2.2"/><ellipse cx="20.6" cy="9" rx="5" ry="4.6" fill="none" stroke="#6e6e6e" stroke-width="2.2"/><path d="M1.6 6.6 C6 3.6 22 3.6 26.4 6.6 M12.4 8 H15.6" fill="none" stroke="#6e6e6e" stroke-width="2"/></svg>
<svg style="left:1562px;top:632.5px" width="16" height="16" viewBox="0 0 16 16"><path d="M4.6 1.6 L10.8 8 L4.6 14.4" fill="none" stroke="#6e6e6e" stroke-width="3.1"/></svg>
<svg style="left:1596px;top:631px" width="18" height="22" viewBox="0 0 18 22"><rect x="1" y="1.6" width="15.6" height="4.4" fill="#f4c07c"/><rect x="1" y="7.6" width="15.6" height="5" fill="#f4c07c"/><rect x="1" y="14.2" width="15.6" height="5" fill="#f4c07c"/></svg>
<span class="t" style="left:1619.9px;top:626px;color:#8b0000;letter-spacing:0.455px;">this</span>
<span class="t" style="left:1656.4px;top:626px;color:#000;">=</span>
<span class="t" style="left:1673.6px;top:626px;color:#8a8a8a;letter-spacing:0.451px;">{ThreadPoolT</span>
<div style="left:0;top:0;width:1.2px;height:1011px;background:#9c9c9c"></div>
<svg style="left:0;top:0" width="1789" height="1011" viewBox="0 0 1789 1011">
<path d="M846.3 434.6 L724.6 242.3 L721.2 244.6 L718.9 228.2 L734.1 237.8 L731.9 238.9 Z" fill="#f93a3a"/>
<path d="M516.8 336.7 L232.7 650.5 L229.4 649.7 L225.1 665.7 L241.9 658.6 L239.4 656.3 Z" fill="#f93a3a"/>
</svg>
</body></html>
